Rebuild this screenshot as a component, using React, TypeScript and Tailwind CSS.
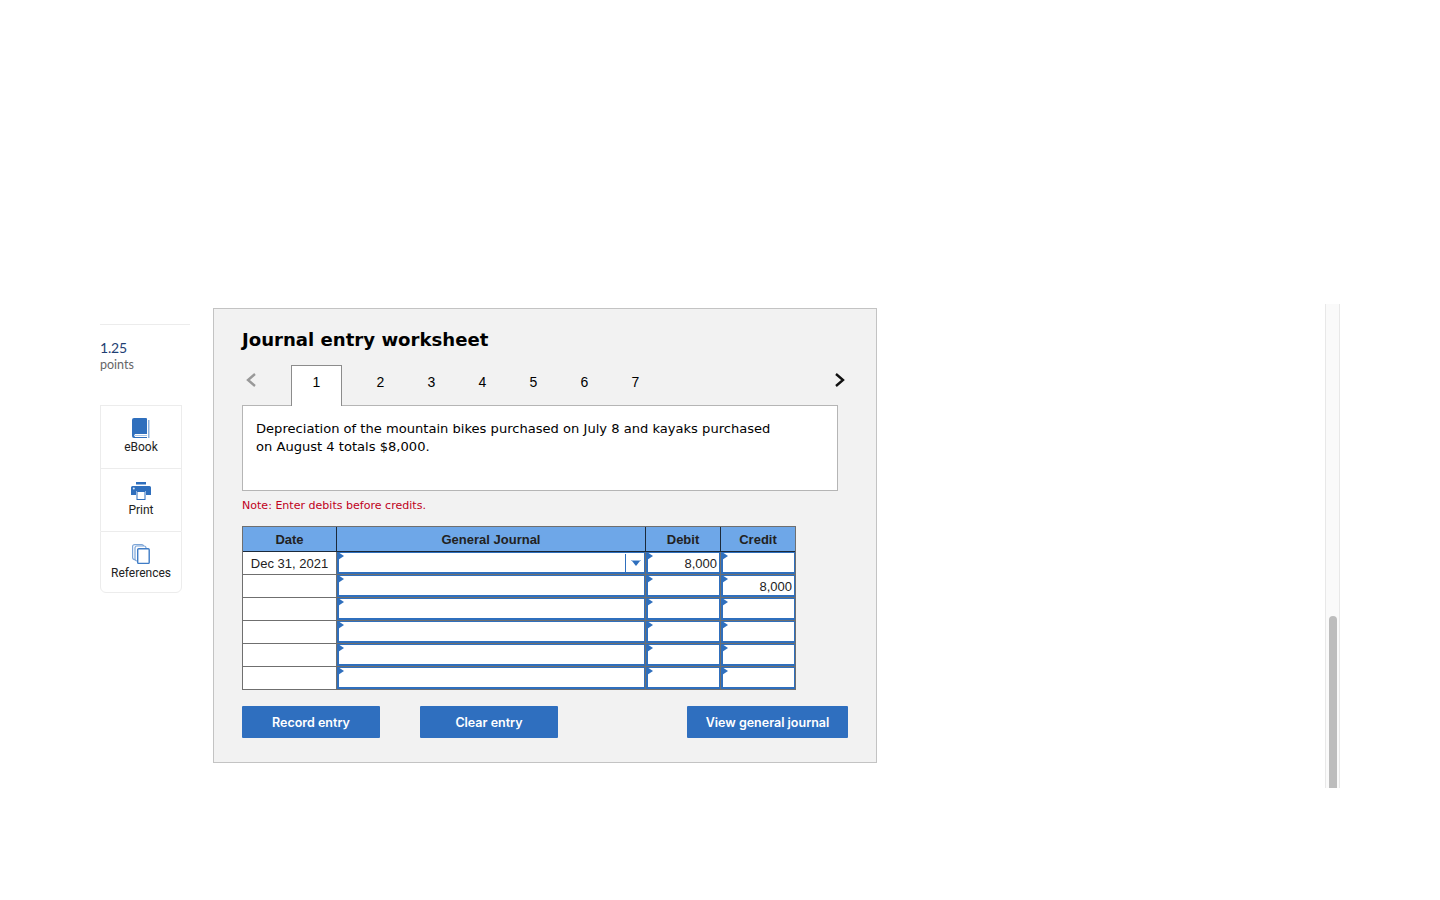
import React from "react";

const rows = [
  { date: "Dec 31, 2021", debit: "8,000", credit: "", select: true },
  { date: "", debit: "", credit: "8,000" },
  { date: "", debit: "", credit: "" },
  { date: "", debit: "", credit: "" },
  { date: "", debit: "", credit: "" },
  { date: "", debit: "", credit: "" },
];

const InputCell = ({ value, select }: { value?: string; select?: boolean }) => (
  <div className="relative h-[23px] bg-white border-l border-[#6f6f6f] border-b">
    <div className="h-full border-[#2f6fbd] border-l-2 border-r border-t border-b-2 flex items-center justify-end pr-[2px] pt-[2px] text-[13px] text-[#222] [font-family:'Liberation_Sans',sans-serif]">
      {value}
      {select && (
        <div className="h-[18px] w-[19px] mr-[-2px] -mt-[2px] border-l border-[#2f6fbd] flex items-center justify-center pl-[2px]">
          <svg width="10" height="6" viewBox="0 0 10 6"><path d="M0 0h10v1H0z" fill="#9dbde4" /><path d="M1 1h8L5 6z" fill="#2f6fbd" /></svg>
        </div>
      )}
    </div>
    <svg className="absolute left-[1px] top-0" width="6" height="8" viewBox="0 0 6 8"><path d="M0 0l6 4-6 4z" fill="#2f6fbd" /></svg>
  </div>
);

const Book = () => (
  <svg width="18" height="20" viewBox="0 0 18 20">
    <path d="M2 0h12a1 1 0 0 1 1 1v15H3a2 2 0 0 0 0 3h12v1H2a2 2 0 0 1-2-2V2a2 2 0 0 1 2-2z" fill="#2f6fbd" />
    <path d="M16 2h1.5v18H16z" fill="#8fb3de" />
    <path d="M3 17h12v1H3z" fill="#a9c5e6" />
  </svg>
);

const Printer = () => (
  <svg width="20" height="18" viewBox="0 0 20 18">
    <path d="M5 0h10v2.5H5z" fill="#2f6fbd" />
    <path d="M1.5 4h17A1.5 1.5 0 0 1 20 5.500V13h-5V9H5v4H0V5.500A1.500 1.500 0 0 1 1.500 4z" fill="#2f6fbd" />
    <rect x="6" y="9.500" width="8" height="8" fill="#fff" stroke="#2f6fbd" />
    <circle cx="2.800" cy="6.500" r="1" fill="#dbe7f5" />
  </svg>
);

const Copies = () => (
  <svg width="18" height="20" viewBox="0 0 18 20" fill="#fff" stroke="#7ea6d8" strokeWidth="1.200">
    <rect x="0.600" y="0.600" width="11" height="15" rx="2" />
    <rect x="3" y="2" width="11" height="15" rx="2" />
    <rect x="5.700" y="4.700" width="11.500" height="14.700" rx="1" stroke="#3f7cc6" strokeWidth="1.400" />
  </svg>
);

const Tool = ({ icon, label, h, cls }: { icon: React.ReactNode; label: string; h: string; cls?: string }) => (
  <div className={`${h} flex flex-col items-center border border-[#ececec] pt-[12px] ${cls ?? ""}`}>
    <div className="h-[20px] flex items-center">{icon}</div>
    <div className="mt-[2px] text-[12px] leading-[14px] text-[#222]">{label}</div>
  </div>
);

export default function App() {
  return (
    <div className="h-[900px] bg-white overflow-hidden flex pt-[304px] pl-[100px] [font-family:'Open_Sans',sans-serif]">
      {/* left rail */}
      <div className="w-[90px] mt-[20px] shrink-0">
        <div className="border-t border-[#ececec] pt-[14px]">
          <div className="text-[14px] leading-[18px] tracking-[-0.2px] text-[#1f3f73] [font-family:'Lato',sans-serif]">1.25</div>
          <div className="text-[12.5px] leading-[16px] text-[#666] [font-family:'Lato',sans-serif]">points</div>
        </div>
        <div className="mt-[32px] w-[82px] [font-family:'Roboto',sans-serif]">
          <Tool icon={<Book />} label="eBook" h="h-[63px]" cls="border-b-0" />
          <Tool icon={<Printer />} label="Print" h="h-[63px]" cls="border-b-0" />
          <Tool icon={<Copies />} label="References" h="h-[62px]" cls="rounded-b-[6px]" />
        </div>
      </div>

      {/* worksheet panel */}
      <div className="ml-[23px] mt-[4px] w-[664px] h-[455px] shrink-0 bg-[#f2f2f2] border border-[#c3c3c3] pl-[28px] [font-family:'DejaVu_Sans',sans-serif]">
        <h1 className="mt-[19px] text-[18.1px] leading-[24px] font-bold text-black">Journal entry worksheet</h1>

        <div className="mt-[13px] h-[41px] w-[596px] flex relative z-10">
          <svg className="mt-[7px] ml-[3px]" width="12" height="16" viewBox="0 0 12 16" fill="none" stroke="#999" strokeWidth="2.400"><path d="M10 2L3 8l7 6" /></svg>
          <div className="ml-[34px] h-[41px] w-[51px] pb-[8px] bg-white border border-[#8c8c8c] border-b-0 flex items-center justify-center text-[14px] text-black [font-family:'Liberation_Sans',sans-serif]">1</div>
          <div className="ml-[13px] flex text-[14px] text-black [font-family:'Liberation_Sans',sans-serif]">
            {["2", "3", "4", "5", "6", "7"].map((n) => (
              <div key={n} className="w-[51px] h-[41px] pb-[6px] flex items-center justify-center">{n}</div>
            ))}
          </div>
          <svg className="ml-auto -mr-[8px] mt-[7px]" width="12" height="16" viewBox="0 0 12 16" fill="none" stroke="#111" strokeWidth="2.400"><path d="M2 2l7 6-7 6" /></svg>
        </div>

        <div className="-mt-px w-[596px] h-[86px] bg-white border border-[#b5b5b5] px-[13px] pt-[14px] text-[13.09px] leading-[18px] text-black">
          Depreciation of the mountain bikes purchased on July 8 and kayaks purchased<br />
          on August 4 totals $8,000.
        </div>

        <p className="mt-[8px] text-[11.06px] leading-[14px] text-[#c00020]">Note: Enter debits before credits.</p>

        <div className="mt-[13px] w-[554px] border-l border-t border-r border-[#6f6f6f] grid grid-cols-[93px_309px_75px_75px] [font-family:'Liberation_Sans',sans-serif]">
          {["Date", "General Journal", "Debit", "Credit"].map((h, i) => (
            <div key={h} className={`h-[25px] pt-[1px] bg-[#6ea7e8] border-b border-[#1c2a3a] flex items-center justify-center text-[13px] font-bold text-[#222] ${i > 0 ? "border-l" : ""}`}>{h}</div>
          ))}
          {rows.map((r, i) => (
            <React.Fragment key={i}>
              <div className="h-[23px] pt-[1px] bg-white border-b border-[#6f6f6f] flex items-center justify-center text-[13px] text-[#222]">{r.date}</div>
              <InputCell select={r.select} />
              <InputCell value={r.debit} />
              <InputCell value={r.credit} />
            </React.Fragment>
          ))}
        </div>

        <div className="mt-[16px] w-[606px] flex text-[12.5px] font-semibold text-white [font-family:'Inter',sans-serif]">
          <button className="w-[138px] h-[32px] pt-[2px] bg-[#2f6fbf] rounded-[1px]">Record entry</button>
          <button className="ml-[40px] w-[138px] h-[32px] pt-[2px] bg-[#2f6fbf] rounded-[1px]">Clear entry</button>
          <button className="ml-auto w-[161px] h-[32px] pt-[2px] bg-[#2f6fbf] rounded-[1px]">View general journal</button>
        </div>
      </div>

      {/* scroll track */}
      <div className="ml-[448px] w-[15px] h-[484px] shrink-0 bg-[#fafafa] border-x border-[#e8e8e8] flex flex-col justify-end items-center">
        <div className="w-[8px] h-[172px] bg-[#bdbdbd] rounded-t-[4px]" />
      </div>
    </div>
  );
}
